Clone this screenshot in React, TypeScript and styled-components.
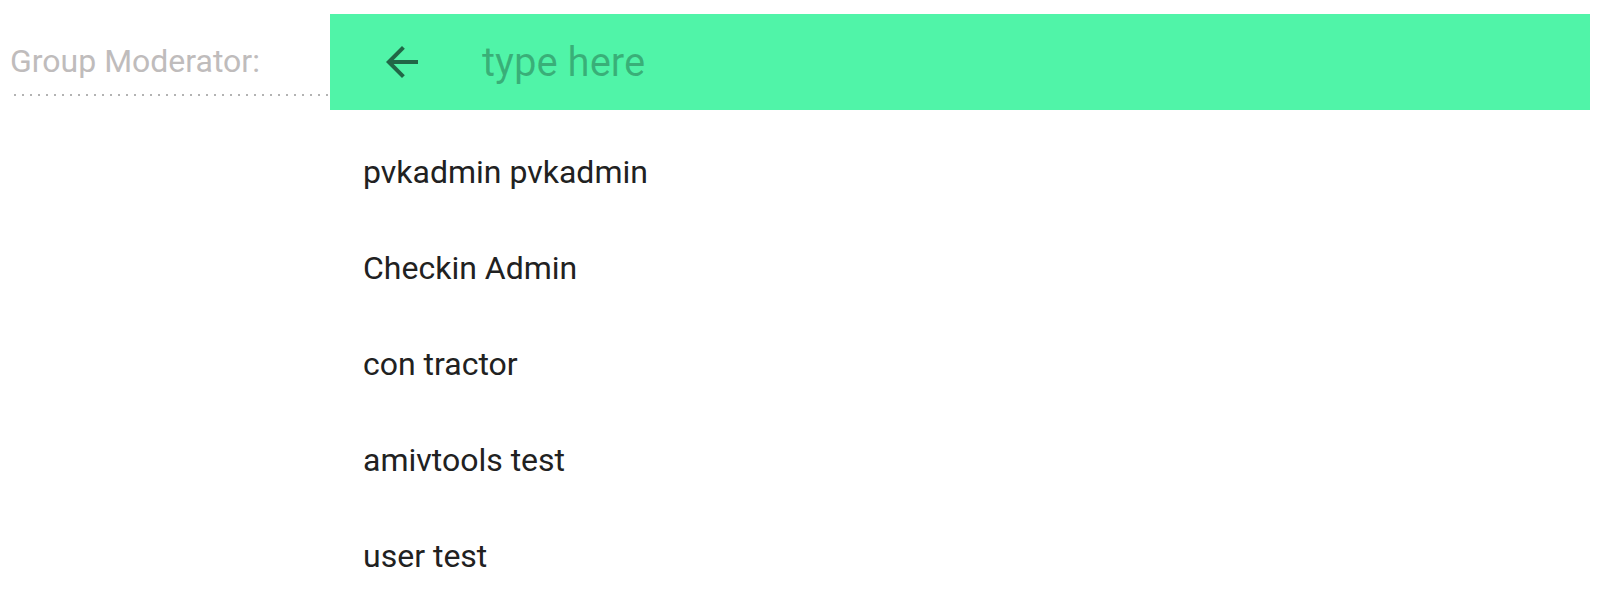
import React from "react";
import styled, { createGlobalStyle } from "styled-components";

const Global = createGlobalStyle`
  html, body { margin: 0; padding: 0; background: #ffffff; }
  body { font-family: Roboto, "Noto Sans", Arial, sans-serif; }
`;

const Page = styled.div`
  display: flex;
  align-items: flex-start;
  padding-top: 14px;
  width: 1600px;
`;

const LabelCell = styled.div`
  width: 316px;
  margin-left: 14px;
  height: 82px;
  background-image: linear-gradient(to right, #b3b3b3 0 2px, transparent 2px 8px);
  background-size: 8px 2px;
  background-repeat: repeat-x;
  background-position: 0 80px;
  position: relative;
`;

const Label = styled.span`
  position: absolute;
  left: -4px;
  top: 27px;
  font-size: 32px;
  line-height: 40px;
  color: #bfbcbc;
  white-space: nowrap;
`;

const Picker = styled.div`
  width: 1260px;
  display: flex;
  flex-direction: column;
`;

const SearchBar = styled.div`
  height: 96px;
  background: #50f4a8;
  display: flex;
  align-items: center;
  padding-left: 48px;
  gap: 56px;
`;

const BackButton = styled.button`
  width: 48px;
  height: 48px;
  padding: 0;
  border: none;
  background: transparent;
  display: flex;
  align-items: center;
  justify-content: center;
  color: rgba(0, 0, 0, 0.58);
`;

const SearchInput = styled.input`
  flex: 1;
  border: none;
  outline: none;
  background: transparent;
  font-family: Roboto, sans-serif;
  font-size: 40px;
  padding: 0;
  color: #222;
  &::placeholder {
    color: rgba(0, 0, 0, 0.28);
  }
`;

const List = styled.ul`
  list-style: none;
  margin: 0;
  padding: 14px 0 0 0;
`;

const Item = styled.li`
  height: 96px;
  display: flex;
  align-items: center;
  padding-left: 33px;
  font-size: 32px;
  color: #212121;
  box-sizing: border-box;
`;

const users = [
  "pvkadmin pvkadmin",
  "Checkin Admin",
  "con tractor",
  "amivtools test",
  "user test",
];

export default function App() {
  return (
    <>
      <Global />
      <Page>
        <LabelCell>
          <Label>Group Moderator:</Label>
        </LabelCell>
        <Picker>
          <SearchBar>
            <BackButton aria-label="back">
              <svg width="48" height="48" viewBox="0 0 24 24" fill="currentColor">
                <path d="M20 11H7.83l5.59-5.59L12 4l-8 8 8 8 1.41-1.41L7.83 13H20v-2z" />
              </svg>
            </BackButton>
            <SearchInput placeholder="type here" />
          </SearchBar>
          <List>
            {users.map((u) => (
              <Item key={u}>{u}</Item>
            ))}
          </List>
        </Picker>
      </Page>
    </>
  );
}
